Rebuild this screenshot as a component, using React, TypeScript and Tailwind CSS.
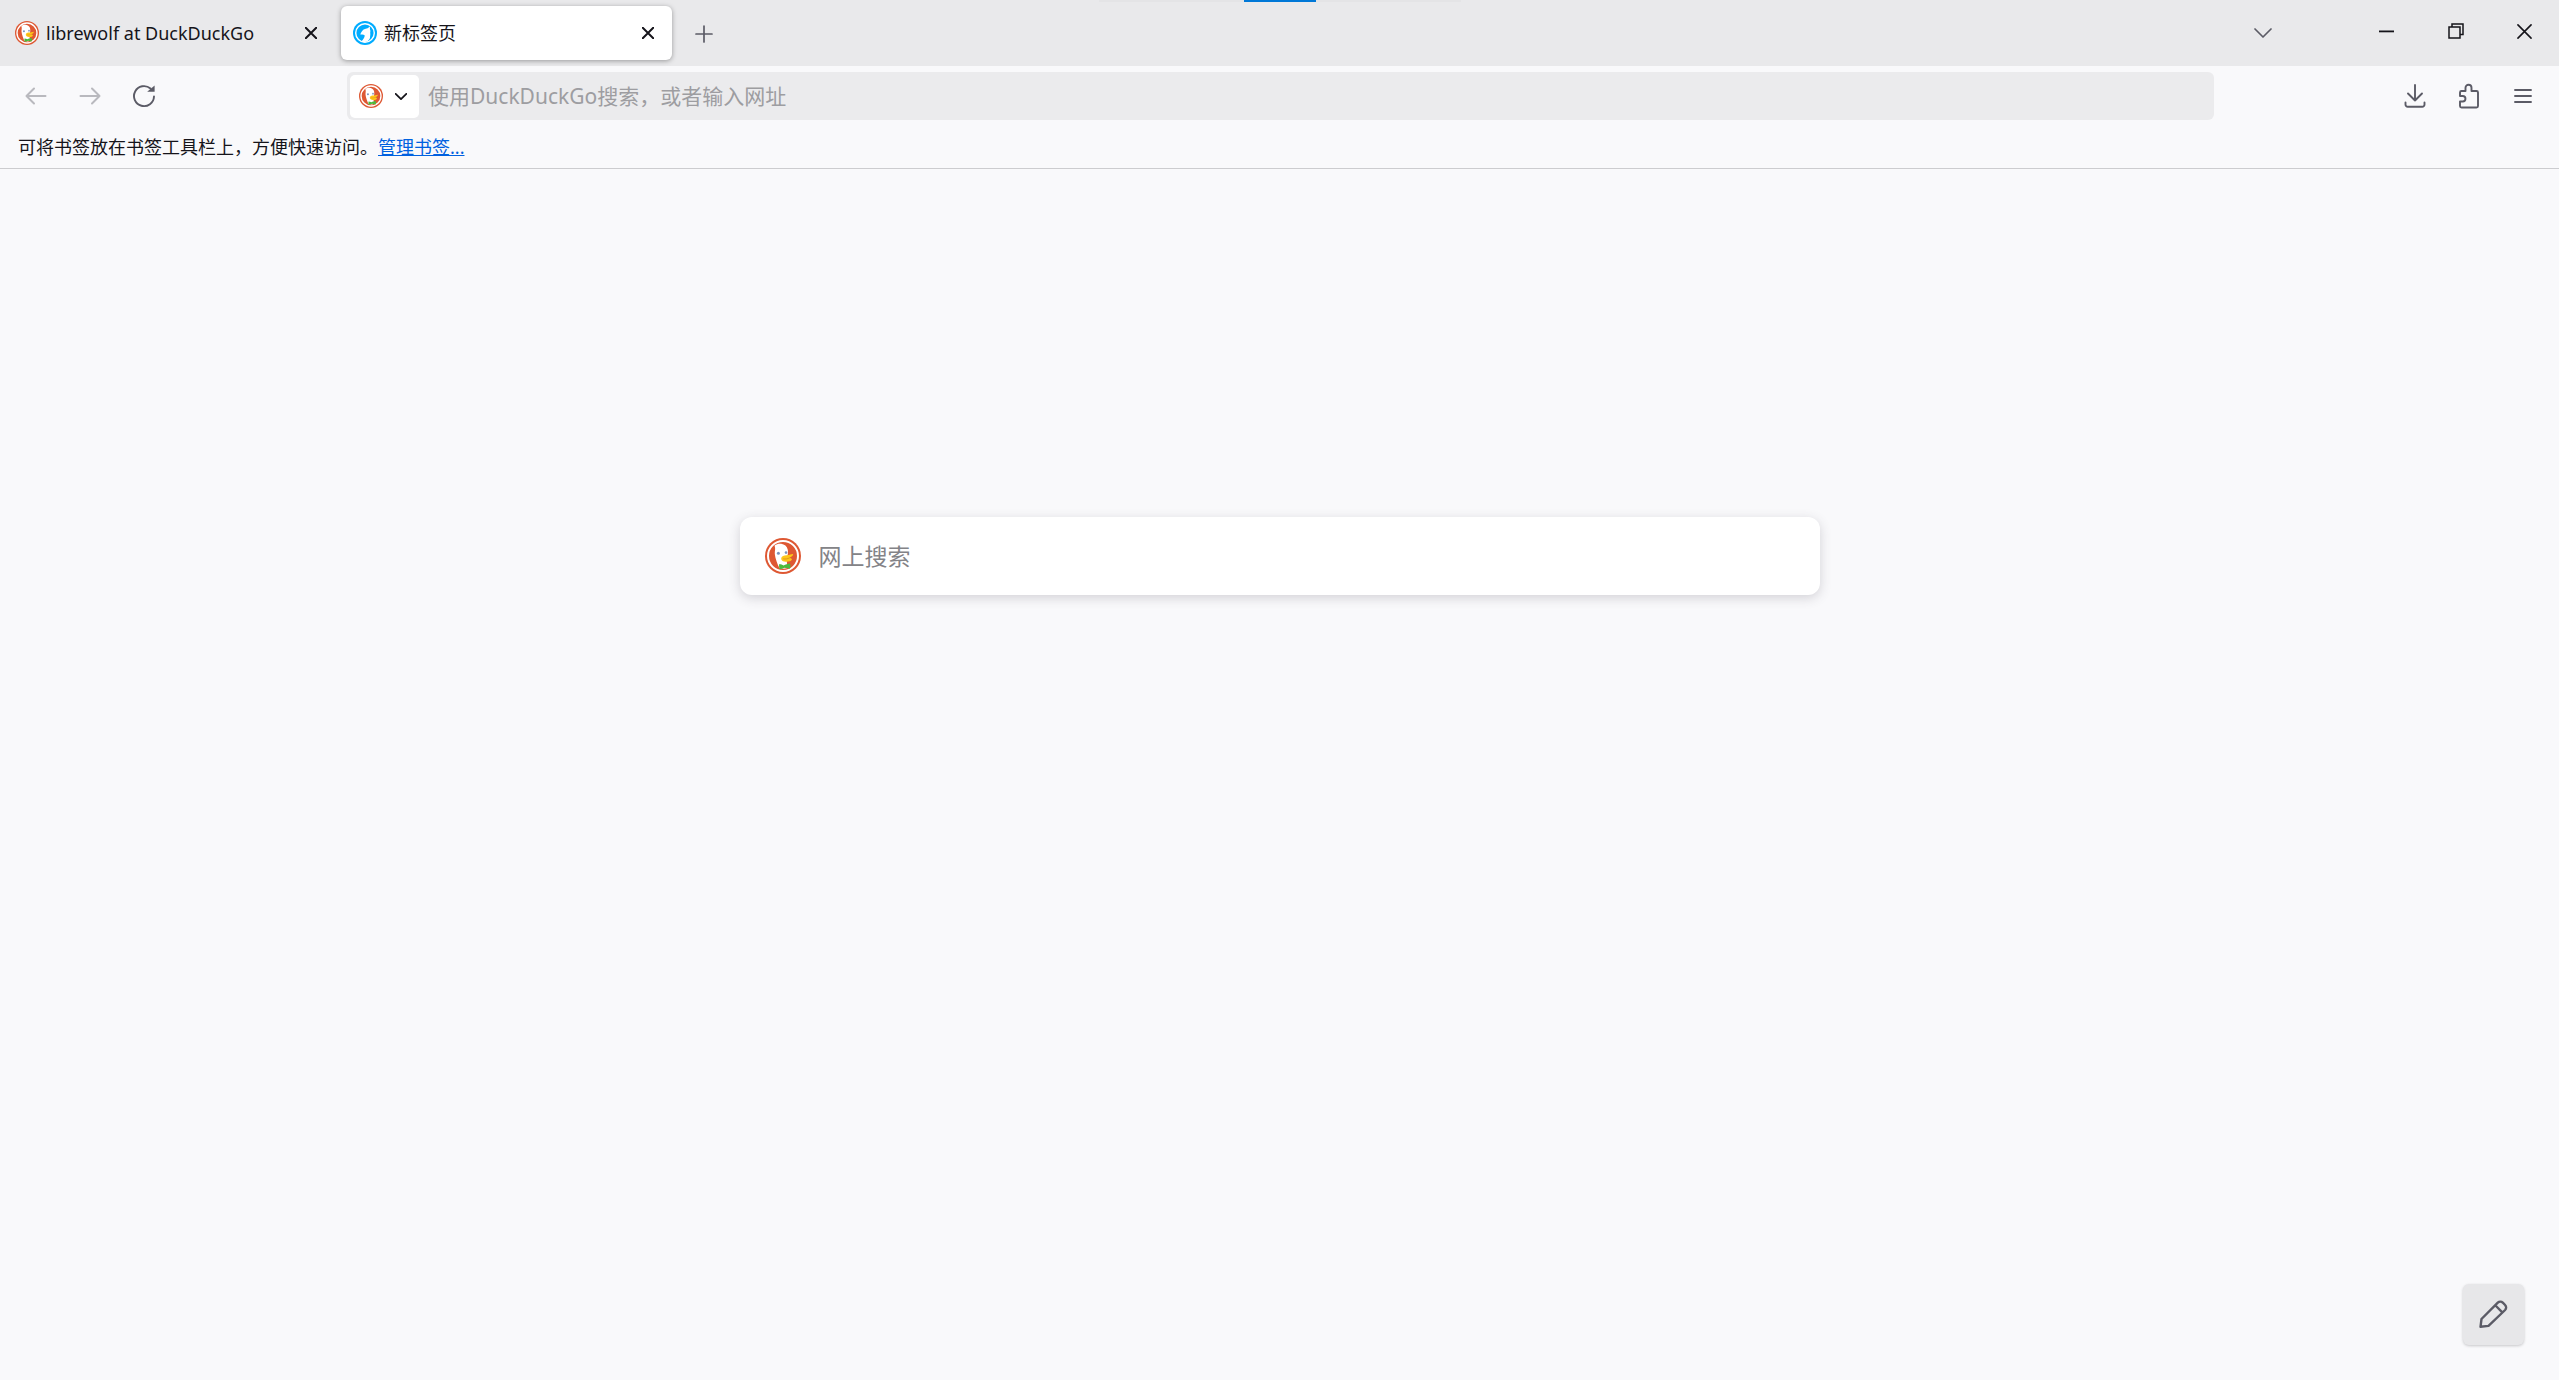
import React from "react";

function DuckIcon({ className }: { className: string }) {
  return (
    <svg viewBox="0 0 36 36" className={className} aria-hidden="true">
      <circle cx="18" cy="18" r="18" fill="#de5833" />
      <circle cx="18" cy="18" r="15" fill="none" stroke="#fff" strokeWidth="2" />
      <path d="M9.600 7.600c1.800-1.600 4.200-2.200 6.600-1.900 3.300.5 5.800 2.500 6.500 5.700.5 2.200.2 4.200-.2 6.400l-.8 4 .6 8.200c-2.300 1-5.200.8-7.900.1-1.900-3.900-4.200-9.600-4.600-14.100-.2-2.900 1-4.700-.2-8.400z" fill="#fff" />
      <circle cx="13.400" cy="15.300" r="1.500" fill="#7b93bd" />
      <circle cx="21" cy="14.600" r="1.300" fill="#7b93bd" />
      <path d="M16.200 20.200c.2-1.900 2.800-2.900 5.300-2.900 2.300-.1 4.200-1 6.600-1.200.5 1.500-1.600 2.900-3.800 3.600 1.200.5 2.900.8 2.600 1.900-.6 2-4.800 2.700-7.700 2-1.700-.5-3.200-1.700-3-3.400z" fill="#fdc61a" />
      <path d="M18.200 20.800c2.200.5 4.400.1 6.600-1" fill="none" stroke="#dd8a1c" strokeWidth=".8" />
      <path d="M14.300 26.100c1.600.2 3 .7 4.300 1.300 1.900-1 4-1.900 6.400-2 .6 1.800.5 3.800 0 5.300-1.900 0-3.900-.4-5.400-.9-1.500.8-3.300 1.300-4.900 1.400-.7-1.600-.8-3.500-.4-5.100z" fill="#4cba3c" />
    </svg>
  );
}

function WolfIcon({ className }: { className: string }) {
  return (
    <svg viewBox="0 0 24 24" className={className} aria-hidden="true">
      <circle cx="12" cy="12" r="12" fill="#00acff" />
      <circle cx="12" cy="12" r="9.300" fill="none" stroke="#fff" strokeWidth="1.400" />
      <path d="M7.300 13.400c.6-1.900 1.900-3.600 3.300-4.800 1.500-.8 2.800-1.100 4-1.400l2.400-1.700-.1 2.800c.5 1.100.7 2 .3 3 .3 1.500.1 3-.1 4.300.2 1.500-.8 3.500-2.400 4.400-2 1.300-4.600 1.500-6.500.5 1.800-1.500 3.200-3.500 3.600-5.900-.9-.9-2-1.300-3-1.100z" fill="#fff" />
    </svg>
  );
}

function Cross({ className, width = 2.600 }: { className: string; width?: number }) {
  return (
    <svg viewBox="0 0 16 16" className={className} fill="none" stroke="currentColor" strokeWidth={width} aria-hidden="true">
      <path d="M1 1l14 14M15 1L1 15" strokeLinecap="round" />
    </svg>
  );
}

function Chevron({ className, width }: { className: string; width: number }) {
  return (
    <svg viewBox="0 0 18 10" className={className} fill="none" stroke="currentColor" strokeWidth={width} strokeLinecap="round" strokeLinejoin="round" aria-hidden="true">
      <path d="M1 1l8 8 8-8" />
    </svg>
  );
}

function Arrow({ className }: { className: string }) {
  return (
    <svg viewBox="0 0 22 18" className={className} fill="none" stroke="currentColor" strokeWidth="2" strokeLinecap="round" strokeLinejoin="round" aria-hidden="true">
      <path d="M20.500 9h-19M9 1.500L1.500 9 9 16.500" />
    </svg>
  );
}

const toolButton = "flex h-12 w-12 items-center justify-center rounded-md";

function Tab({ icon, title, active }: { icon: React.ReactNode; title: string; active?: boolean }) {
  return (
    <div
      role="tab"
      aria-selected={!!active}
      className={
        active
          ? "flex h-[54px] w-[331px] items-center rounded-md bg-white pr-3 pl-3 shadow-[0_1px_5px_rgba(0,0,0,0.35)]"
          : "flex h-[54px] w-[332px] items-center pr-3 pl-3"
      }
    >
      {icon}
      <span className="ml-[7px] flex-1 truncate">{title}</span>
      <button aria-label="关闭标签页" className="flex h-6 w-6 items-center justify-center">
        <Cross className="h-3 w-3" />
      </button>
    </div>
  );
}

export default function App() {
  return (
    <div className="flex min-h-screen flex-col bg-[#f9f9fb] font-['Noto_Sans','Noto_Sans_CJK_SC',sans-serif] text-lg leading-6 text-[#15141a]">
      <header>
        <div className="relative flex h-[66px] bg-[#e9e9eb] pl-[3px]">
          <div className="absolute top-0 left-1/2 h-[2px] w-[362px] -translate-x-1/2 bg-[#e4e4e6]">
            <div className="mx-auto h-full w-[72px] bg-[#0078d7]" />
          </div>
          <div role="tablist" className="flex gap-[6px] pt-[6px]">
            <Tab icon={<DuckIcon className="h-6 w-6" />} title="librewolf at DuckDuckGo" />
            <Tab icon={<WolfIcon className="h-6 w-6" />} title="新标签页" active />
          </div>
          <button aria-label="新建标签页" className="ml-2 flex h-[68px] w-12 items-center justify-center text-[#5b5b66]">
            <svg viewBox="0 0 18 18" className="h-[18px] w-[18px]" fill="none" stroke="currentColor" strokeWidth="1.700" strokeLinecap="round" aria-hidden="true">
              <path d="M9 1v16M1 9h16" />
            </svg>
          </button>
          <div className="ml-auto flex">
            <button aria-label="列出所有标签页" className="mr-[65px] flex h-[66px] w-12 items-center justify-center text-[#5b5b66]">
              <Chevron className="h-[10px] w-[18px]" width={1.700} />
            </button>
            <button aria-label="最小化" className="flex h-[62px] w-[69px] items-center justify-center">
              <svg viewBox="0 0 15 15" className="h-[15px] w-[15px]" aria-hidden="true">
                <path d="M0 6.500h15v1.800H0z" fill="currentColor" />
              </svg>
            </button>
            <button aria-label="还原" className="flex h-[62px] w-[69px] items-center justify-center">
              <svg viewBox="0 0 16 16" className="h-4 w-4" fill="none" stroke="currentColor" strokeWidth="1.500" aria-hidden="true">
                <path d="M1 4h11v11H1zM4 4V1h11v10.500h-3" />
              </svg>
            </button>
            <button aria-label="关闭" className="flex h-[62px] w-[69px] items-center justify-center">
              <Cross className="h-[15px] w-[15px]" width={1.700} />
            </button>
          </div>
        </div>

        <div className="flex h-[60px] items-center pr-3 pl-3 text-[#5b5b66]">
          <nav className="flex gap-[6px]" aria-label="导航">
            <button aria-label="后退" disabled className={`${toolButton} text-[#b9b9be]`}>
              <Arrow className="h-[18px] w-[22px]" />
            </button>
            <button aria-label="前进" disabled className={`${toolButton} text-[#b9b9be]`}>
              <Arrow className="h-[18px] w-[22px] rotate-180" />
            </button>
            <button aria-label="刷新" className={toolButton}>
              <svg viewBox="0 0 24 24" className="h-6 w-6" fill="none" stroke="currentColor" strokeWidth="1.900" strokeLinecap="round" aria-hidden="true">
                <path d="M22 12.500A10 10 0 1 1 18.500 4.500" />
                <path d="M22.600 1.500v6.300h-7.400z" fill="currentColor" stroke="none" />
              </svg>
            </button>
          </nav>
          <div className="mr-[177px] ml-[179px] flex h-12 flex-1 items-center rounded-md bg-[#ebebed] p-[3px]">
            <button aria-label="选择搜索引擎" className="flex h-[43px] w-[69px] items-center justify-between rounded-[5px] bg-white pr-3 pl-[9px] text-[#15141a]">
              <DuckIcon className="h-6 w-6" />
              <Chevron className="h-[7px] w-3" width={2.600} />
            </button>
            <input
              aria-label="地址栏"
              placeholder="使用DuckDuckGo搜索，或者输入网址"
              className="ml-[9px] h-full flex-1 bg-transparent text-[21px] outline-none placeholder:text-[#9d9da1]"
            />
          </div>
          <div className="flex gap-[6px] pb-px">
            <button aria-label="下载" className={toolButton}>
              <svg viewBox="0 0 22 24" className="h-6 w-[22px]" fill="none" stroke="currentColor" strokeWidth="1.900" strokeLinecap="round" strokeLinejoin="round" aria-hidden="true">
                <path d="M11 1v15.500M4 9.500l7 7 7-7M1.500 18.500v2a2.200 2.200 0 0 0 2.200 2.200h14.600a2.200 2.200 0 0 0 2.200-2.200v-2" />
              </svg>
            </button>
            <button aria-label="扩展" className={toolButton}>
              <svg viewBox="0 0 22 26" className="h-[26px] w-[22px]" fill="none" stroke="currentColor" strokeWidth="1.900" strokeLinejoin="round" aria-hidden="true">
                <path d="M2 13V9.500a1.500 1.500 0 0 1 1.500-1.500h4V4.700a3 3 0 0 1 6 0V8h5a1.500 1.500 0 0 1 1.500 1.500V23a1.500 1.500 0 0 1-1.500 1.500h-15A1.500 1.500 0 0 1 2 23v-4.500h2.700a2.750 2.750 0 0 0 0-5.500z" />
              </svg>
            </button>
            <button aria-label="打开应用程序菜单" className={toolButton}>
              <svg viewBox="0 0 18 16" className="h-4 w-[18px]" fill="none" stroke="currentColor" strokeWidth="1.900" strokeLinecap="round" aria-hidden="true">
                <path d="M1 2h16M1 8h16M1 14h16" />
              </svg>
            </button>
          </div>
        </div>

        <div className="flex h-[43px] items-center border-b border-[#cccccf] pb-px pl-[18px]">
          <p>
            可将书签放在书签工具栏上，方便快速访问。
            <a href="#bookmarks" className="text-[#0061e0] underline">管理书签...</a>
          </p>
        </div>
      </header>

      <main className="flex flex-1 flex-col">
        <label className="mx-auto mt-[348px] flex h-[78px] w-full max-w-[1080px] items-center rounded-xl bg-white pl-[25px] shadow-[0_3px_12px_rgba(58,57,68,0.2)]">
          <DuckIcon className="h-9 w-9" />
          <input
            type="search"
            aria-label="网上搜索"
            placeholder="网上搜索"
            className="ml-[18px] h-full flex-1 bg-transparent text-[23px] outline-none placeholder:text-[#838387]"
          />
        </label>
        <button aria-label="个性化新标签页" className="mt-auto mr-[35px] mb-[35px] flex h-[61px] w-[61px] items-center justify-center self-end rounded-md bg-[#e7e7e9] text-[#5b5b66] shadow-[0_1px_3px_rgba(0,0,0,0.2)]">
          <svg viewBox="0 0 30 30" className="h-[30px] w-[30px]" fill="none" stroke="currentColor" strokeWidth="2.400" strokeLinejoin="round" aria-hidden="true">
            <path d="M1.500 26.800L2.500 19 18.800 2.700a3.600 3.600 0 0 1 5 0l2.300 2.300a3.600 3.600 0 0 1 0 5L9.500 25.900zM16.500 5.500l6.800 6.800" />
          </svg>
        </button>
      </main>
    </div>
  );
}
